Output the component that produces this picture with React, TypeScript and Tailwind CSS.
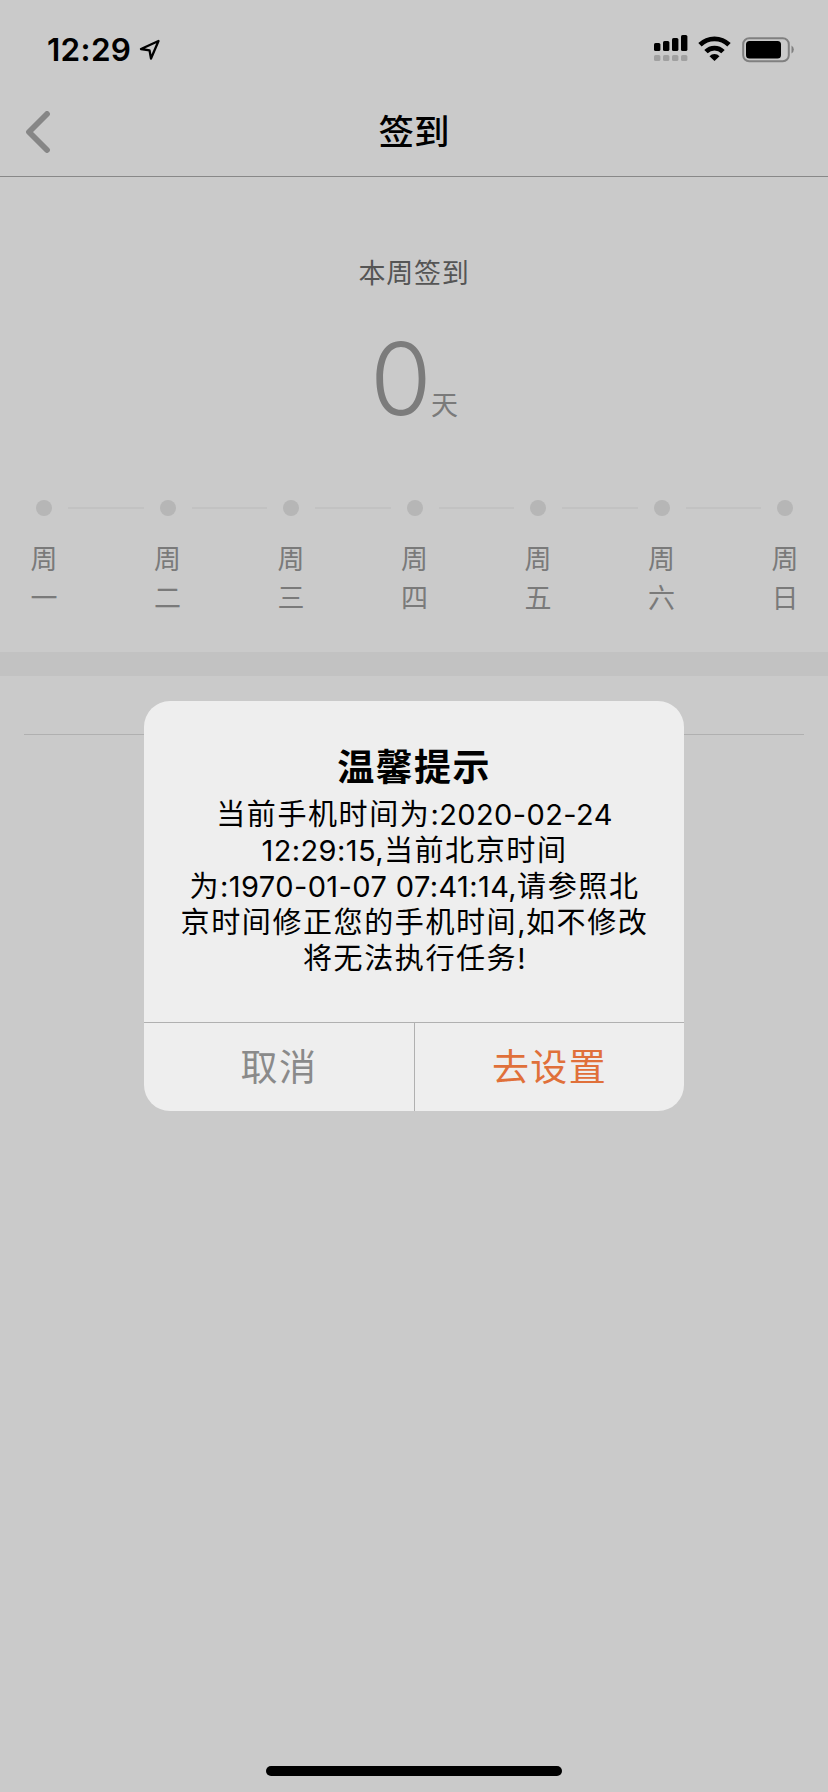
import React from 'react';

const days = ['一', '二', '三', '四', '五', '六', '日'];

const messageLines = [
  '当前手机时间为:2020-02-24',
  '12:29:15,当前北京时间',
  '为:1970-01-07 07:41:14,请参照北',
  '京时间修正您的手机时间,如不修改',
  '将无法执行任务!',
];

const StatusBar = () => (
  <div className="flex h-[88px] items-start justify-between pl-[47px] pr-[33px]">
    <div className="flex items-center pt-[30px]">
      <span className="w-[84px] whitespace-nowrap font-['Inter'] text-[31.5px] font-semibold leading-[40px] tracking-[0.3px] text-black">
        12:29
      </span>
      <svg width="22" height="22" viewBox="0 0 22 22" className="ml-2 -mt-px">
        <path
          d="M19.5 2 L2 10 L10.5 11.3 L12 19.5 Z"
          fill="none"
          stroke="#000"
          strokeWidth="2.3"
          strokeLinejoin="round"
        />
      </svg>
    </div>
    <div className="flex pt-[32px]">
      <svg width="36" height="32" viewBox="0 0 36 32">
        <rect x="0" y="11" width="6.4" height="8" rx="1.6" />
        <rect x="9" y="9" width="6.4" height="10" rx="1.6" />
        <rect x="18" y="6" width="6.4" height="13" rx="1.6" />
        <rect x="27" y="3" width="6.4" height="16" rx="1.6" />
        <g fill="#a0a0a0">
          <rect x="0" y="23" width="6.4" height="6" rx="1.6" />
          <rect x="9" y="23" width="6.4" height="6" rx="1.6" />
          <rect x="18" y="23" width="6.4" height="6" rx="1.6" />
          <rect x="27" y="23" width="6.4" height="6" rx="1.6" />
        </g>
      </svg>
      <svg width="34" height="32" viewBox="0 0 34 32" className="ml-[8px]">
        <g fill="none" stroke="#000" strokeWidth="4.8">
          <path d="M2 12.8 A20.5 20.5 0 0 1 31 12.8" />
          <path d="M8 19.6 A12 12 0 0 1 25 19.6" />
        </g>
        <path d="M16.5 29 L11.5 24.3 A6.8 6.8 0 0 1 21.5 24.3 Z" />
      </svg>
      <svg width="54" height="32" viewBox="0 0 54 32" className="ml-[9px]">
        <rect x="2.2" y="6.2" width="45.6" height="23" rx="6" fill="none" stroke="#808080" strokeWidth="2" />
        <rect x="5" y="9" width="35" height="17.5" rx="3.5" />
        <path d="M50.5 13.5 A4.6 4.6 0 0 1 50.5 21.5 Z" fill="#808080" />
      </svg>
    </div>
  </div>
);

const NavBar = () => (
  <div className="grid h-[89px] grid-cols-3 items-center border-b border-[#888888] px-[25px]">
    <svg width="26" height="42" viewBox="0 0 26 42">
      <path
        d="M22 3 L4 21 L22 39"
        fill="none"
        stroke="#868686"
        strokeWidth="5.8"
        strokeLinecap="round"
        strokeLinejoin="round"
      />
    </svg>
    <h1 className="pb-1 text-center text-[35.5px] font-medium leading-none text-black">签到</h1>
  </div>
);

const WeekRow = () => (
  <div className="flex items-start pl-[30px] pr-[29px]">
    {days.map((day, i) => (
      <React.Fragment key={day}>
        {i > 0 && <div className="mx-[10px] mt-[7px] h-[2px] flex-1 bg-[#c2c2c2]" />}
        <div className="flex w-7 shrink-0 flex-col items-center">
          <div className="h-4 w-4 rounded-full bg-[#b6b6b6]" />
          <div className="mt-[22px] flex flex-col text-[27px] leading-[39px] text-[#7a7a7a]">
            <span>周</span>
            <span>{day}</span>
          </div>
        </div>
      </React.Fragment>
    ))}
  </div>
);

const MessageLine = ({ text }: { text: string }) => (
  <div className="flex h-[36px] items-baseline justify-center whitespace-pre">
    {text.split(/([\x20-\x7e]+)/).map((part, i) =>
      i % 2 === 1 ? (
        <span key={i} className="font-['Inter'] text-[29px] leading-[36px] tracking-[0.4px]">
          {part}
        </span>
      ) : (
        <span key={i} className="text-[29px] leading-[36px] tracking-[1.6px]">
          {part}
        </span>
      ),
    )}
  </div>
);

const TimeDialog = () => (
  <div className="absolute inset-0 flex items-start justify-center pt-[701px]">
    <div className="flex h-[410px] w-[540px] flex-col overflow-hidden rounded-[26px] bg-[#eeeeee]">
      <div className="flex-1 pt-[42px] text-center text-black">
        <h2 className="text-[37px] font-bold leading-[44px] tracking-[1.4px]">温馨提示</h2>
        <div className="mt-[7px] pl-px">
          {messageLines.map((line) => (
            <MessageLine key={line} text={line} />
          ))}
        </div>
      </div>
      <div className="flex h-[89px] border-t border-[#b0b0b0] text-[37px] tracking-[1.4px]">
        <button className="w-[271px] border-r border-[#b0b0b0] pb-0.5 text-[#8a8a8a]">取消</button>
        <button className="flex-1 pb-0.5 text-[#e0703a]">去设置</button>
      </div>
    </div>
  </div>
);

const App: React.FC = () => {
  return (
    <div className="relative flex h-[1792px] w-[828px] flex-col overflow-hidden bg-[#cacaca] font-['Noto_Sans_CJK_SC',sans-serif]">
      <StatusBar />
      <NavBar />
      <div className="flex h-[323px] flex-col items-center pt-[75px]">
        <p className="text-[27px] leading-[40px] tracking-[0.7px] text-[#555555]">本周签到</p>
        <div className="mt-[32px] flex items-baseline">
          <span className="font-['Inter'] text-[100px] font-[350] leading-[110px] text-[#7c7c7c]">0</span>
          <span className="-ml-px text-[27px] leading-[40px] text-[#7a7a7a]">天</span>
        </div>
      </div>
      <WeekRow />
      <div className="mt-[36px] h-[24px] shrink-0 bg-[#c2c2c2]" />
      <div className="mx-6 mt-[58px] h-px shrink-0 bg-[#b0b0b0]" />
      <div className="mx-auto mb-4 mt-auto h-[10px] w-[296px] rounded-full bg-black" />
      <TimeDialog />
    </div>
  );
};

export default App;
